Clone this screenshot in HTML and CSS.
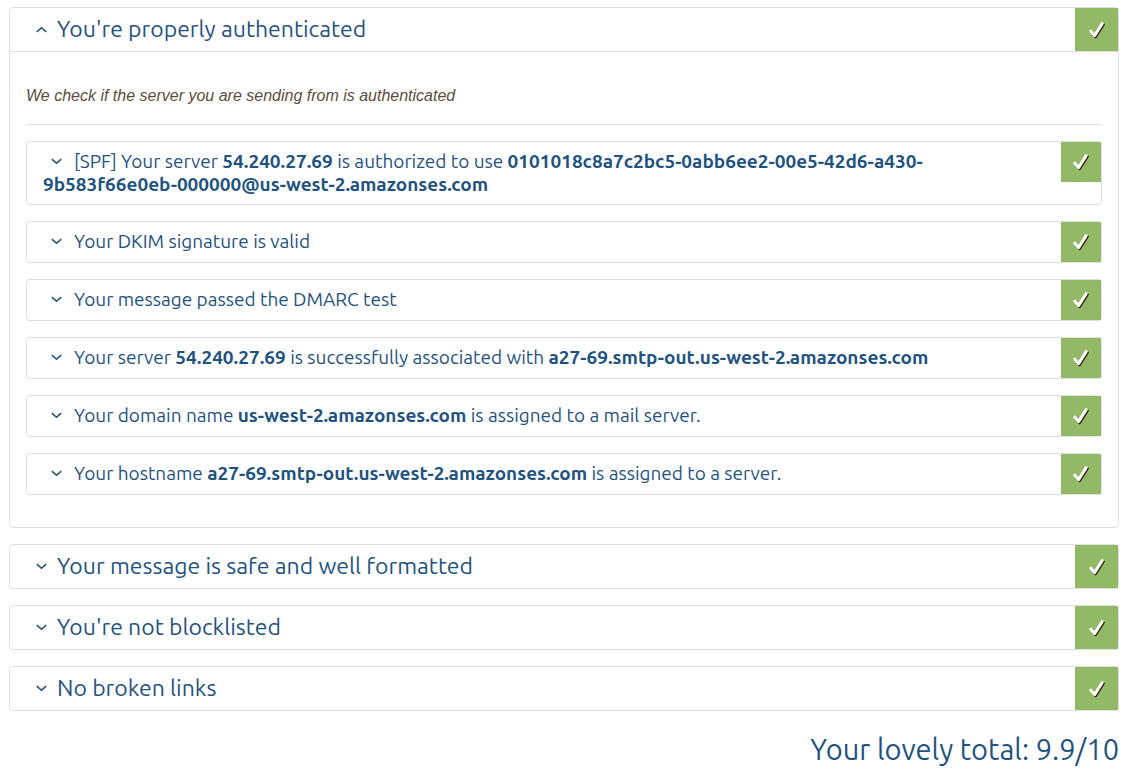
FILE: index.html
```html
<!DOCTYPE html>
<html lang="en">
<head>
    <meta charset="UTF-8">
    <meta name="viewport" content="width=device-width, initial-scale=1.0">
    <title>Email test result</title>
    <link rel="stylesheet" href="styles.css">
</head>
<body>
    <svg class="symbols" aria-hidden="true">
        <symbol id="arrow-down" viewBox="0 0 11 7">
            <path d="M0.8 1.2 L5.5 5.3 L10.2 1.2" fill="none" stroke="currentColor" stroke-width="1.6"/>
        </symbol>
        <symbol id="arrow-up" viewBox="0 0 11 7">
            <path d="M0.8 5.8 L5.5 1.7 L10.2 5.8" fill="none" stroke="currentColor" stroke-width="1.6"/>
        </symbol>
        <symbol id="check" viewBox="0 0 18 18">
            <path d="M3.6 11.2 L7.6 15.8 L15.4 3.6" fill="none" stroke="#2b1a08" stroke-width="2.8" stroke-linecap="round" stroke-linejoin="round"/>
            <path d="M2.8 10.2 L6.6 14.6 L14.2 2.6" fill="none" stroke="#fff" stroke-width="3" stroke-linecap="round" stroke-linejoin="round"/>
        </symbol>
    </svg>

    <main class="results">
        <section class="card">
            <h2 class="header">
                <button class="toggle" type="button" aria-expanded="true"><svg class="arrow"><use href="#arrow-up"/></svg>You're properly authenticated</button>
                <span class="status"><svg class="check"><use href="#check"/></svg></span>
            </h2>
            <div class="content">
                <p class="about">We check if the server you are sending from is authenticated</p>
                <div class="tests">
                    <h3 class="card test">
                        <button class="toggle" type="button" aria-expanded="false"><svg class="arrow"><use href="#arrow-down"/></svg>[SPF] Your server <b>54.240.27.69</b> is authorized to use <b>0101018c8a7c2bc5-0abb6ee2-00e5-42d6-a430-9b583f66e0eb-000000@us-west-2.amazonses.com</b></button>
                        <span class="status"><svg class="check"><use href="#check"/></svg></span>
                    </h3>
                    <h3 class="card test">
                        <button class="toggle" type="button" aria-expanded="false"><svg class="arrow"><use href="#arrow-down"/></svg>Your DKIM signature is valid</button>
                        <span class="status"><svg class="check"><use href="#check"/></svg></span>
                    </h3>
                    <h3 class="card test">
                        <button class="toggle" type="button" aria-expanded="false"><svg class="arrow"><use href="#arrow-down"/></svg>Your message passed the DMARC test</button>
                        <span class="status"><svg class="check"><use href="#check"/></svg></span>
                    </h3>
                    <h3 class="card test">
                        <button class="toggle" type="button" aria-expanded="false"><svg class="arrow"><use href="#arrow-down"/></svg>Your server <b>54.240.27.69</b> is successfully associated with <b>a27-69.smtp-out.us-west-2.amazonses.com</b></button>
                        <span class="status"><svg class="check"><use href="#check"/></svg></span>
                    </h3>
                    <h3 class="card test">
                        <button class="toggle" type="button" aria-expanded="false"><svg class="arrow"><use href="#arrow-down"/></svg>Your domain name <b>us-west-2.amazonses.com</b> is assigned to a mail server.</button>
                        <span class="status"><svg class="check"><use href="#check"/></svg></span>
                    </h3>
                    <h3 class="card test">
                        <button class="toggle" type="button" aria-expanded="false"><svg class="arrow"><use href="#arrow-down"/></svg>Your hostname <b>a27-69.smtp-out.us-west-2.amazonses.com</b> is assigned to a server.</button>
                        <span class="status"><svg class="check"><use href="#check"/></svg></span>
                    </h3>
                </div>
            </div>
        </section>

        <section class="card">
            <h2 class="header">
                <button class="toggle" type="button" aria-expanded="false"><svg class="arrow"><use href="#arrow-down"/></svg>Your message is safe and well formatted</button>
                <span class="status"><svg class="check"><use href="#check"/></svg></span>
            </h2>
        </section>

        <section class="card">
            <h2 class="header">
                <button class="toggle" type="button" aria-expanded="false"><svg class="arrow"><use href="#arrow-down"/></svg>You're not blocklisted</button>
                <span class="status"><svg class="check"><use href="#check"/></svg></span>
            </h2>
        </section>

        <section class="card">
            <h2 class="header">
                <button class="toggle" type="button" aria-expanded="false"><svg class="arrow"><use href="#arrow-down"/></svg>No broken links</button>
                <span class="status"><svg class="check"><use href="#check"/></svg></span>
            </h2>
        </section>

        <p class="total">Your lovely total: 9.9/10</p>
    </main>
</body>
</html>
```
FILE: styles.css
```css
* {
    box-sizing: border-box;
}
body {
    margin: 0;
    padding: 7px 11px 0 9px;
    background-color: #fff;
    color: #1f5380;
    font-family: Ubuntu, "Noto Sans", sans-serif;
}
.symbols {
    display: none;
}
.results {
    display: flex;
    flex-direction: column;
    gap: 16px;
}
.card {
    border: 1px solid #dee0e6;
    border-radius: 4px;
}
.header, .test {
    display: flex;
    align-items: flex-start;
    margin: 0;
    font-weight: normal;
}
.toggle {
    flex: 1;
    border: none;
    background: none;
    color: inherit;
    font-family: inherit;
    text-align: left;
    cursor: pointer;
}
.arrow {
    width: 11px;
    height: 7px;
}
.status {
    display: flex;
    align-items: center;
    justify-content: center;
    background-color: #91b966;
}
.check {
    width: 18px;
    height: 18px;
}
.header .toggle {
    padding: 6px 16px 8px;
    font-size: 23px;
    line-height: 29px;
}
.header .arrow {
    margin: 0 10px 4px;
}
.header .status {
    width: 43px;
    height: 43px;
}
.content {
    padding: 32px 16px;
    border-top: 1px solid #dee0e6;
}
.about {
    margin: 0;
    padding-bottom: 16px;
    border-bottom: 1px solid #dee0e6;
    color: #5d4d3c;
    font-family: "Liberation Sans", Arial, sans-serif;
    font-size: 16px;
    font-style: italic;
    line-height: 24px;
}
.tests {
    display: flex;
    flex-direction: column;
    gap: 16px;
    margin-top: 16px;
}
.test .toggle {
    padding: 8px 16px;
    font-size: 19px;
    line-height: 23px;
}
.test .arrow {
    margin: 0 12px 3px 8px;
}
.test .status {
    width: 40px;
    height: 40px;
}
.total {
    margin: 0;
    font-size: 29px;
    line-height: 44px;
    text-align: right;
}
```
